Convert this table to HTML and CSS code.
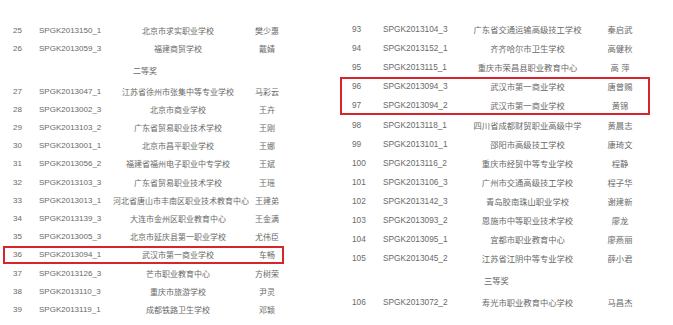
FILE: index.html
```html
<!DOCTYPE html>
<html>
<head>
  <meta charset="UTF-8">
  <title>获奖名单</title>
  <link rel="stylesheet" href="styles.css">
</head>
<body>
  <div class="page">
    <div class="list left">
      <div class="row"><span>25</span><span>SPGK2013150_1</span><span class="school">北京市求实职业学校</span><span class="name">樊少惠</span></div>
      <div class="row"><span>26</span><span>SPGK2013059_3</span><span class="school">福建商贸学校</span><span class="name">戴婧</span></div>
      <div class="level">二等奖</div>
      <div class="row"><span>27</span><span>SPGK2013047_1</span><span class="school">江苏省徐州市张集中等专业学校</span><span class="name">马彩云</span></div>
      <div class="row"><span>28</span><span>SPGK2013002_3</span><span class="school">北京市商业学校</span><span class="name">王卉</span></div>
      <div class="row"><span>29</span><span>SPGK2013103_2</span><span class="school">广东省贸易职业技术学校</span><span class="name">王刚</span></div>
      <div class="row"><span>30</span><span>SPGK2013001_1</span><span class="school">北京市昌平职业学校</span><span class="name">王娜</span></div>
      <div class="row"><span>31</span><span>SPGK2013056_2</span><span class="school">福建省福州电子职业中专学校</span><span class="name">王斌</span></div>
      <div class="row"><span>32</span><span>SPGK2013103_3</span><span class="school">广东省贸易职业技术学校</span><span class="name">王瑶</span></div>
      <div class="row"><span>33</span><span>SPGK2013013_1</span><span class="school">河北省唐山市丰南区职业技术教育中心</span><span class="name">王建弟</span></div>
      <div class="row"><span>34</span><span>SPGK2013139_3</span><span class="school">大连市金州区职业教育中心</span><span class="name">王金满</span></div>
      <div class="row"><span>35</span><span>SPGK2013005_3</span><span class="school">北京市延庆县第一职业学校</span><span class="name">尤伟臣</span></div>
      <div class="row mark"><span>36</span><span>SPGK2013094_1</span><span class="school">武汉市第一商业学校</span><span class="name">车畅</span></div>
      <div class="row"><span>37</span><span>SPGK2013126_3</span><span class="school">芒市职业教育中心</span><span class="name">方树荣</span></div>
      <div class="row"><span>38</span><span>SPGK2013110_3</span><span class="school">重庆市旅游学校</span><span class="name">尹灵</span></div>
      <div class="row"><span>39</span><span>SPGK2013119_1</span><span class="school">成都铁路卫生学校</span><span class="name">邓颖</span></div>
    </div>

    <div class="list right">
      <div class="row"><span>93</span><span>SPGK2013104_3</span><span class="school">广东省交通运输高级技工学校</span><span class="name">秦启武</span></div>
      <div class="row"><span>94</span><span>SPGK2013152_1</span><span class="school">齐齐哈尔市卫生学校</span><span class="name">高健秋</span></div>
      <div class="row"><span>95</span><span>SPGK2013115_1</span><span class="school">重庆市荣昌县职业教育中心</span><span class="name">高 萍</span></div>
      <div class="mark">
        <div class="row"><span>96</span><span>SPGK2013094_3</span><span class="school">武汉市第一商业学校</span><span class="name">唐曾赐</span></div>
        <div class="row"><span>97</span><span>SPGK2013094_2</span><span class="school">武汉市第一商业学校</span><span class="name">黄锦</span></div>
      </div>
      <div class="row"><span>98</span><span>SPGK2013118_1</span><span class="school">四川省成都财贸职业高级中学</span><span class="name">黄晨志</span></div>
      <div class="row"><span>99</span><span>SPGK2013101_1</span><span class="school">邵阳市高级技工学校</span><span class="name">康琦文</span></div>
      <div class="row"><span>100</span><span>SPGK2013116_2</span><span class="school">重庆市经贸中等专业学校</span><span class="name">程静</span></div>
      <div class="row"><span>101</span><span>SPGK2013106_3</span><span class="school">广州市交通高级技工学校</span><span class="name">程子华</span></div>
      <div class="row"><span>102</span><span>SPGK2013142_3</span><span class="school">青岛胶南珠山职业学校</span><span class="name">谢建新</span></div>
      <div class="row"><span>103</span><span>SPGK2013093_2</span><span class="school">恩施市中等职业技术学校</span><span class="name">廖龙</span></div>
      <div class="row"><span>104</span><span>SPGK2013095_1</span><span class="school">宜都市职业教育中心</span><span class="name">廖燕丽</span></div>
      <div class="row"><span>105</span><span>SPGK2013045_2</span><span class="school">江苏省江阴中等专业学校</span><span class="name">薛小君</span></div>
      <div class="level">三等奖</div>
      <div class="row"><span>106</span><span>SPGK2013072_2</span><span class="school">寿光市职业教育中心学校</span><span class="name">马昌杰</span></div>
    </div>
  </div>
</body>
</html>
```

FILE: styles.css
```css
* {
  box-sizing: border-box;
}

body {
  margin: 0;
  background: #fff;
  font-family: "Liberation Sans", "Noto Sans CJK SC", sans-serif;
  color: #696969;
}

.page {
  display: flex;
  gap: 56px;
}

.list {
  display: flex;
  flex-direction: column;
}

.row {
  display: grid;
  align-items: center;
  white-space: nowrap;
}

.school,
.name {
  text-align: center;
}

.mark {
  outline: 2px solid #d6262b;
  outline-offset: -2px;
}

.level {
  display: flex;
  align-items: center;
}

/* left half */
.left {
  width: 281px;
  margin-left: 3px;
  padding-top: 21.7px;
  font-size: 8px;
}

.left .row {
  height: 18.2px;
  grid-template-columns: 36px 74px 137px 34px;
}

.left .row > span:first-child {
  padding-left: 10px;
}

.left .school {
  padding-right: 7px;
}

.left .level {
  height: 24px;
  padding-left: 130px;
}

/* right half */
.right {
  width: 310px;
  padding-top: 19.5px;
  font-size: 8.3px;
}

.right .row {
  height: 19.1px;
  grid-template-columns: 43px 82px 125px 60px;
}

.right .row > span:first-child {
  padding-left: 12px;
}

.right .level {
  height: 24.7px;
  padding-left: 144px;
}
```
